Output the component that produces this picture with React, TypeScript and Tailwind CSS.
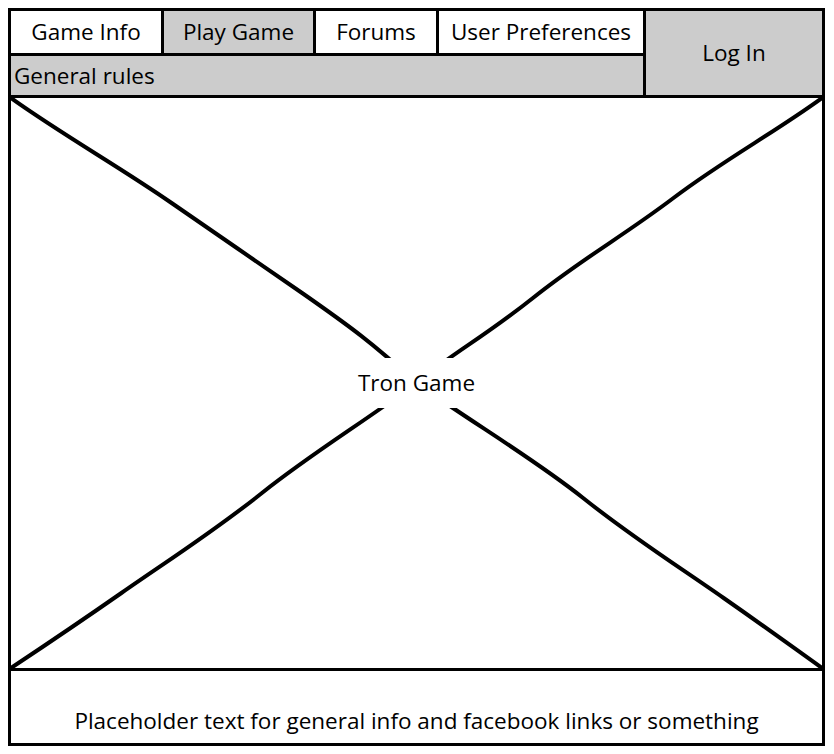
import React from "react";

const tabs = [
    { label: "Game Info", width: "w-[156px]", active: false },
    { label: "Play Game", width: "w-[155px]", active: true },
    { label: "Forums", width: "w-[126px]", active: false },
    { label: "User Preferences", width: "w-[210px]", active: false },
];

function SketchX() {
    return (
        <svg
            className="absolute inset-0 w-full h-full"
            viewBox="0 0 808 570"
            preserveAspectRatio="none"
            fill="none"
            stroke="#000"
            strokeWidth="4"
            strokeLinecap="round"
        >
            <path d="M0 0 C 50 36, 110 70, 160 105 S 240 160, 290 195 S 360 245, 404 285 C 460 325, 520 360, 570 400 S 660 465, 710 500 S 780 550, 808 570" />
            <path d="M808 0 C 760 35, 710 62, 660 100 S 570 160, 520 200 S 440 255, 404 285 C 350 325, 300 355, 250 395 S 160 460, 110 495 S 30 550, 0 570" />
        </svg>
    );
}

export default function App() {
    return (
        <div
            className="w-[834px] h-[754px] bg-white pt-[8px] pl-[8px] text-black"
            style={{ fontFamily: '"Open Sans", "Noto Sans", sans-serif' }}
        >
            <div className="w-[817px] flex flex-col">
                <div className="flex h-[90px]">
                    <div className="w-[638px] flex flex-col">
                        <div className="flex h-[48px]">
                            {tabs.map((t, i) => (
                                <div
                                    key={t.label}
                                    className={`${t.width} ${i > 0 ? "-ml-[3px]" : ""} h-full border-[3px] border-black flex items-center justify-center text-[22.5px] ${
                                        t.active ? "bg-[#cccccc]" : "bg-white"
                                    }`}
                                >
                                    {t.label}
                                </div>
                            ))}
                        </div>
                        <div className="-mt-[3px] flex-1 border-[3px] border-black bg-[#cccccc] flex items-center pl-[3px] text-[22.5px]">
                            General rules
                        </div>
                    </div>
                    <div className="-ml-[3px] flex-1 border-[3px] border-black bg-[#cccccc] flex items-center justify-center text-[22.5px]">
                        Log In
                    </div>
                </div>

                <div className="-mt-[3px] h-[576px] border-[3px] border-black relative flex items-center justify-center">
                    <SketchX />
                    <span className="relative bg-white px-[8px] py-[8px] text-[22.5px]">Tron Game</span>
                </div>

                <div className="-mt-[3px] h-[78px] border-[3px] border-black flex items-end justify-center pb-[5px] text-[22.5px]">
                    Placeholder text for general info and facebook links or something
                </div>
            </div>
        </div>
    );
}
